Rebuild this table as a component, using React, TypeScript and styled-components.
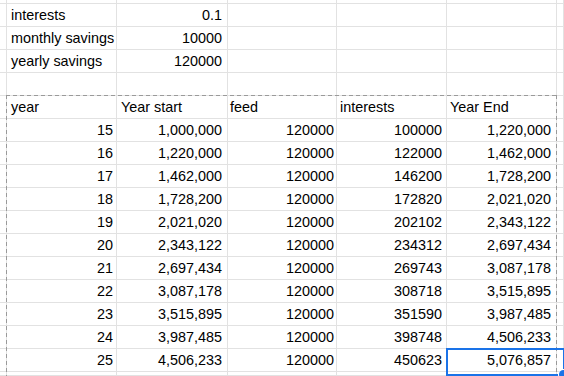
import React from "react";
import styled, { createGlobalStyle } from "styled-components";

const GlobalStyle = createGlobalStyle`
  html, body {
    margin: 0;
    padding: 0;
    background: #ffffff;
    overflow: hidden;
  }
  #root {
    height: 100vh;
  }
`;

const GRID = "#e2e2e2";
const BLUE = "#1a73e8";

const Sheet = styled.div`
  position: relative;
  display: grid;
  grid-template-columns: 7px 110px 111px 109px 110px 110px 1fr;
  grid-template-rows: 4px repeat(16, 23px) 1fr;
  height: 100vh;
  font-family: "Liberation Sans", Arial, sans-serif;
  font-size: 14.4px;
  color: #000000;
  overflow: hidden;
`;

const Cell = styled.div<{ $align: "left" | "right"; $pl: number; $pr: number }>`
  box-sizing: border-box;
  border-right: 1px solid ${GRID};
  border-bottom: 1px solid ${GRID};
  display: flex;
  align-items: flex-end;
  justify-content: ${(p) => (p.$align === "right" ? "flex-end" : "flex-start")};
  padding: 0 ${(p) => p.$pr}px 2px ${(p) => p.$pl}px;
  line-height: 17px;
  white-space: nowrap;
  overflow: hidden;
  min-width: 0;
`;

const Marquee = styled.div`
  position: absolute;
  grid-column: 2 / 7;
  grid-row: 6 / -1;
  top: -1px;
  left: -1px;
  right: 0;
  bottom: -20px;
  pointer-events: none;
  background:
    linear-gradient(to right, #9a9a9a 4px, transparent 4px) left top / 7px 1px repeat-x,
    linear-gradient(to bottom, #9a9a9a 4px, transparent 4px) left top / 1px 7px repeat-y,
    linear-gradient(to bottom, #9a9a9a 4px, transparent 4px) right top / 1px 7px repeat-y;
`;

const Selection = styled.div`
  position: absolute;
  grid-column: 6;
  grid-row: 17;
  top: -1px;
  left: -1px;
  right: -1px;
  bottom: 0;
  box-sizing: border-box;
  border: 2px solid ${BLUE};
  pointer-events: none;
`;

const Handle = styled.div`
  position: absolute;
  right: -5px;
  bottom: -5px;
  width: 9px;
  height: 9px;
  border-radius: 50%;
  background: ${BLUE};
  box-shadow: 0 0 0 1px #ffffff;
`;

type Col = { pl: number; pr: number };
const COLS: Col[] = [
  { pl: 0, pr: 0 },
  { pl: 4, pr: 3 },
  { pl: 4, pr: 5 },
  { pl: 2, pr: 2 },
  { pl: 3, pr: 4 },
  { pl: 3, pr: 5 },
  { pl: 3, pr: 3 },
];

type V = { t: string; r?: boolean };
const L = (t: string): V => ({ t });
const R = (t: string): V => ({ t, r: true });

const data: V[][] = [
  [L("interests"), R("0.1")],
  [L("monthly savings"), R("10000")],
  [L("yearly savings"), R("120000")],
  [],
  [L("year"), L("Year start"), L("feed"), L("interests"), L("Year End")],
  ...[
    ["15", "1,000,000", "120000", "100000", "1,220,000"],
    ["16", "1,220,000", "120000", "122000", "1,462,000"],
    ["17", "1,462,000", "120000", "146200", "1,728,200"],
    ["18", "1,728,200", "120000", "172820", "2,021,020"],
    ["19", "2,021,020", "120000", "202102", "2,343,122"],
    ["20", "2,343,122", "120000", "234312", "2,697,434"],
    ["21", "2,697,434", "120000", "269743", "3,087,178"],
    ["22", "3,087,178", "120000", "308718", "3,515,895"],
    ["23", "3,515,895", "120000", "351590", "3,987,485"],
    ["24", "3,987,485", "120000", "398748", "4,506,233"],
    ["25", "4,506,233", "120000", "450623", "5,076,857"],
  ].map((row) => row.map(R)),
];

const ROWS = 18; // partial top row + 16 rows + partial bottom row

export default function App() {
  const cells: React.ReactNode[] = [];
  for (let r = 0; r < ROWS; r++) {
    const rowData = r >= 1 && r <= 16 ? data[r - 1] : [];
    for (let c = 0; c < COLS.length; c++) {
      const v = c >= 1 ? rowData[c - 1] : undefined;
      cells.push(
        <Cell key={`${r}-${c}`} $align={v?.r ? "right" : "left"} $pl={COLS[c].pl} $pr={COLS[c].pr}>
          {v?.t ?? ""}
        </Cell>
      );
    }
  }
  return (
    <>
      <GlobalStyle />
      <Sheet>
        {cells}
        <Marquee />
        <Selection>
          <Handle />
        </Selection>
      </Sheet>
    </>
  );
}
